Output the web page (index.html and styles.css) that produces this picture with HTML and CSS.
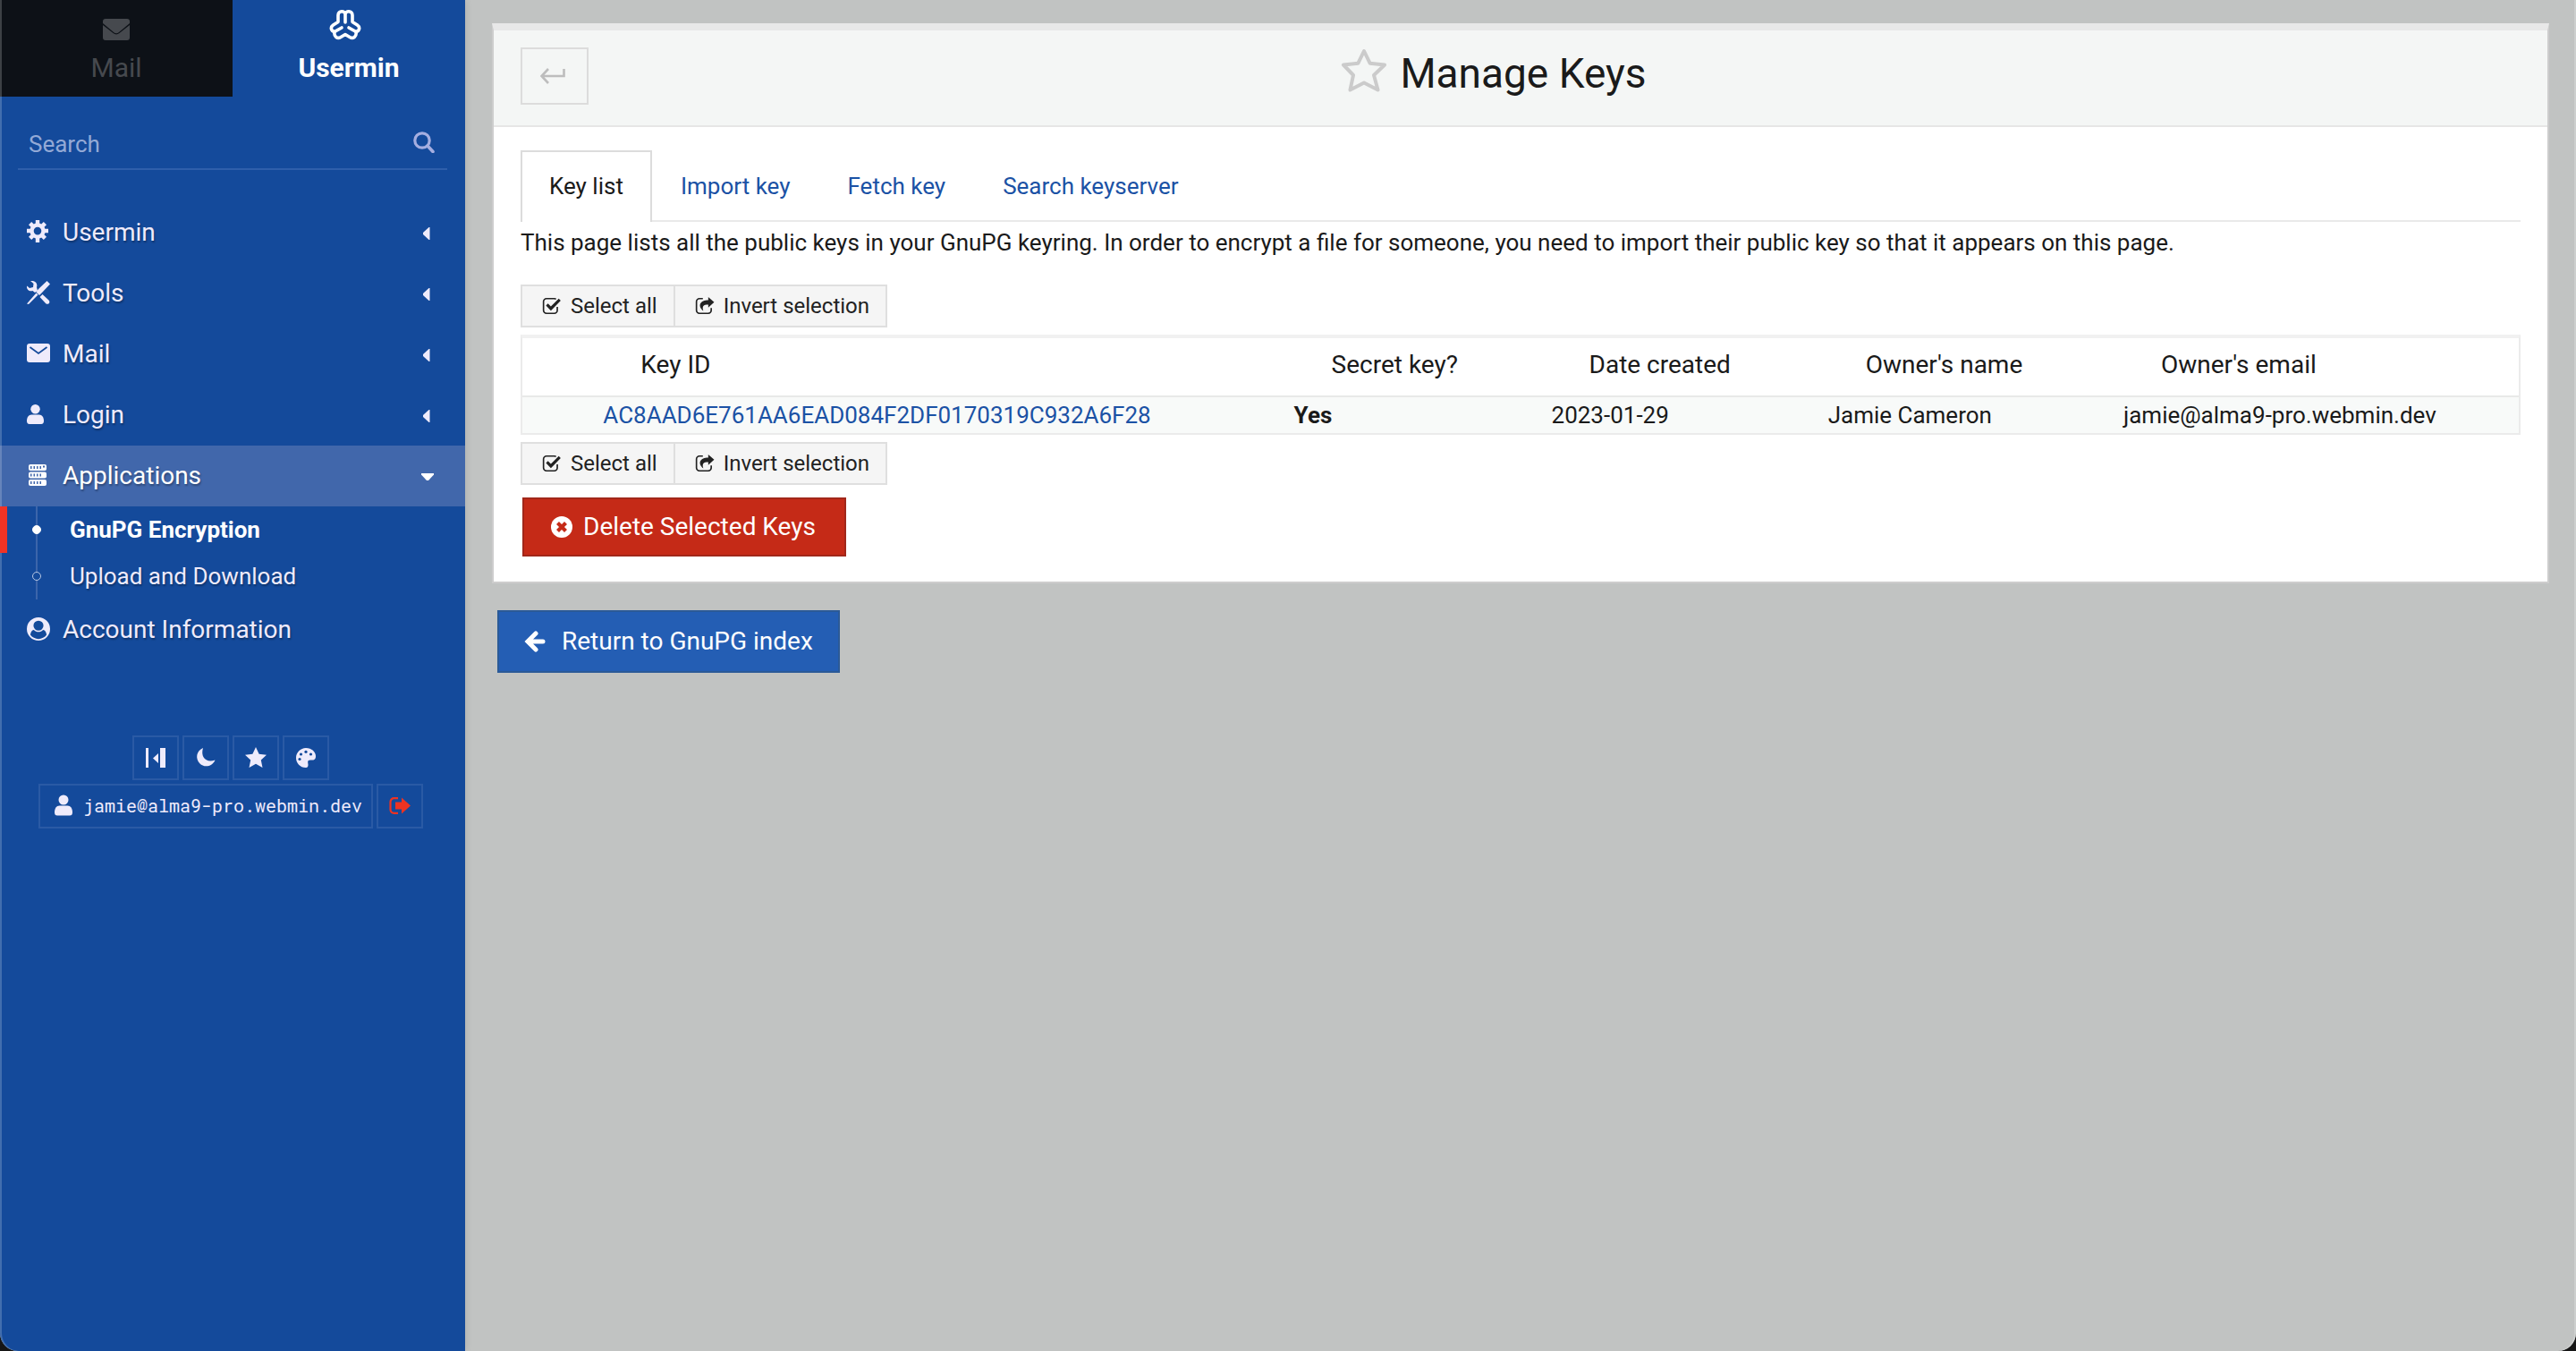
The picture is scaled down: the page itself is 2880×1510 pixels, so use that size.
FILE: index.html
```html
<!DOCTYPE html>
<html lang="en">
<head>
<meta charset="utf-8">
<meta name="viewport" content="width=device-width, initial-scale=1">
<title>Manage Keys</title>
<link rel="stylesheet" href="styles.css">
</head>
<body>
<svg class="defs" aria-hidden="true">
  <symbol id="check-square" viewBox="0 0 20 20"><path d="M15.500 11v3.500a3 3 0 0 1-3 3h-8a3 3 0 0 1-3-3v-9a3 3 0 0 1 3-3h8q1 0 1.700.5" fill="none" stroke="currentColor" stroke-width="1.500"/><path d="M4 9.500l2-2 3 3L17 2.500l2 2L9 14.700z" fill="currentColor"/></symbol>
  <symbol id="share-square" viewBox="0 0 20 20"><path d="M8 2.500H4.500a3 3 0 0 0-3 3v9a3 3 0 0 0 3 3h9a3 3 0 0 0 3-3V12" fill="none" stroke="currentColor" stroke-width="1.500"/><path d="M13.500 1l6 5.200-6 5.300V8.600c-5 0-6.500 1.500-5 6.400-6.500-5.500-3-11 5-11z" fill="currentColor"/></symbol>
  <symbol id="caret" viewBox="0 0 8 14"><path d="M7.500 0v14h-1L0 8V6L6.500 0z" fill="currentColor"/></symbol>
  <symbol id="person" viewBox="0 0 20 24"><circle cx="10" cy="6" r="5.500" fill="currentColor"/><path d="M0 20c0-4.500 2-7.500 5.500-7.500h9c3.500 0 5.500 3 5.500 7.500 0 2.500-1 3.500-3 3.500H3c-2 0-3-1-3-3.500z" fill="currentColor"/></symbol>
</svg>
<div class="layout">
  <aside class="sidebar">
    <nav class="switch">
      <a class="switch-tab dark" href="#mail">
        <svg class="switch-icon" viewBox="0 0 30 34"><path d="M3 5h24a3 3 0 0 1 3 3v2L18 20q-3 2.500-6 0L0 10V8a3 3 0 0 1 3-3z" fill="currentColor"/><path d="M0 12l11.500 9q3.500 2.800 7 0L30 12v14a3 3 0 0 1-3 3H3a3 3 0 0 1-3-3z" fill="currentColor"/></svg>
        <span>Mail</span>
      </a>
      <a class="switch-tab active" href="#usermin">
        <svg class="switch-icon wide" viewBox="0 0 36 36"><g fill="none" stroke="currentColor" stroke-width="3.600" stroke-linecap="round" stroke-linejoin="round"><path d="M18 15V6.500M18 6.500C18 1.500 10 1.500 10 7v7.500L4.500 18C1 20.500 2 24.500 6 25.500c-1 5 3 8.500 7 6l5-3 5 3c4 2.500 8-1 7-6 4-1 5-5 1.500-7.500L26 14.500V7c0-5.500-8-5.500-8-.5"/><path d="M6 25.500l8-4.500M30 25.500L22 21"/></g></svg>
        <span>Usermin</span>
      </a>
    </nav>
    <label class="search">
      <input type="search" placeholder="Search" aria-label="Search">
      <svg width="24" height="24" viewBox="0 0 24 24"><circle cx="10" cy="10" r="8.200" fill="none" stroke="currentColor" stroke-width="3.200"/><path d="M16 16l6 6.500" stroke="currentColor" stroke-width="3.600" stroke-linecap="round"/></svg>
    </label>
    <nav class="menu">
      <a class="item" href="#m1"><svg width="26" height="26" viewBox="0 0 26 26"><path fill="currentColor" fill-rule="evenodd" d="M9.800 0h4.400v3.600l2 .9L18.800 2l3.200 3.200-2.500 2.600.9 2H24v4.400h-3.600l-.9 2 2.500 2.600-3.200 3.200-2.600-2.500-2 .9V25H9.800v-4.600l-2-.9L5.200 22 2 18.800l2.500-2.600-.9-2H0V9.800h3.600l.9-2L2 5.200 5.200 2l2.600 2.500 2-.9zM12 7.800a4.300 4.300 0 1 0 0 8.600 4.300 4.300 0 0 0 0-8.600z"/></svg><span>Usermin</span><svg class="caret" width="8" height="14"><use href="#caret"/></svg></a>
      <a class="item" href="#m2"><svg width="26" height="26" viewBox="0 0 26 26"><g fill="currentColor"><path d="M22.500 0L26 3.500 16.500 13.500 14 16l-3.500-3.500L13 9zM10.500 13.500l2 2L2 26l-2-.5z"/><path d="M4 0c5-1 8.500 3 7 7l1 4-3 2-2.500-2C2.500 12.500-.8 9 .2 5.500L3 8l4-1 .5-4zM14.500 18l3-3 7 6.500c2.500 2.500-1 6-3.500 3.500z"/></g></svg><span>Tools</span><svg class="caret" width="8" height="14"><use href="#caret"/></svg></a>
      <a class="item" href="#m3"><svg width="26" height="22" viewBox="0 0 26 22"><rect width="26" height="21" rx="3" fill="currentColor"/><path d="M3.500 4l9.500 7 9.500-7" fill="none" stroke="#144a9b" stroke-width="1.800"/></svg><span>Mail</span><svg class="caret" width="8" height="14"><use href="#caret"/></svg></a>
      <a class="item" href="#m4"><svg width="19" height="24" viewBox="0 0 20 24"><use href="#person"/></svg><span>Login</span><svg class="caret" width="8" height="14"><use href="#caret"/></svg></a>
      <a class="item open" href="#m5"><svg width="24" height="24" viewBox="0 0 24 24"><g fill="currentColor"><rect x="2" width="20" height="7" rx="2"/><rect x="2" y="8.500" width="20" height="7" rx="2"/><rect x="2" y="17" width="20" height="7" rx="2"/></g><path d="M4 3.500h12M4 12h12M4 20.500h12" stroke="#4167ab" stroke-width="3" stroke-dasharray="1.500 2"/><path d="M18 2.500h2" stroke="#4167ab" stroke-width="2"/></svg><span>Applications</span><svg class="caret down" width="14" height="8" viewBox="0 0 14 8"><path d="M0 0h14v1.500L8 8H6L0 1.500z" fill="currentColor"/></svg></a>
      <div class="submenu">
        <a class="sub current" href="#s1"><span class="dot"></span>GnuPG Encryption</a>
        <a class="sub" href="#s2"><span class="dot"></span>Upload and Download</a>
      </div>
      <a class="item" href="#m6"><svg width="26" height="26" viewBox="0 0 1792 1792"><path fill="currentColor" fill-rule="evenodd" d="M1523 1339q-22-155-87.500-257.500t-184.500-118.500q-67 74-159.500 115.500t-195.500 41.500-195.500-41.500-159.500-115.500q-119 16-184.500 118.500t-87.500 257.500q106 150 271 237.500t356 87.500 356-87.500 271-237.500zm-243-699q0-159-112.500-271.500t-271.500-112.500-271.500 112.500-112.500 271.500 112.500 271.500 271.500 112.500 271.500-112.500 112.500-271.500zM896 0a896 896 0 1 1 0 1792A896 896 0 0 1 896 0z"/></svg><span>Account Information</span></a>
    </nav>
    <div class="tools">
      <div class="tool-row">
        <button class="tool" type="button" aria-label="Collapse menu"><svg width="24" height="24" viewBox="0 0 24 24"><path d="M1 1h3v22H1zM17 1h6v22h-6zM15 7v11L9 12.500z" fill="currentColor"/></svg></button>
        <button class="tool" type="button" aria-label="Night mode"><svg width="24" height="24" viewBox="0 0 24 24"><path d="M9 1C6 11 12 18 22.500 14.500 19 22.500 10 23 5.500 18.500 0 13 1.500 4 9 1z" fill="currentColor"/></svg></button>
        <button class="tool" type="button" aria-label="Favorites"><svg width="24" height="24" viewBox="0 0 24 24"><path d="M12 0l3.600 7.700 8.400 1-6.200 5.700 1.700 8.600-7.500-4.200L4.500 23l1.700-8.600L0 8.700l8.400-1z" fill="currentColor"/></svg></button>
        <button class="tool" type="button" aria-label="Theme"><svg width="24" height="24" viewBox="0 0 24 24"><path d="M12 1c6.500 0 11 4.500 11 9 0 5-3 4.500-6 4.500-4 0-2.500 3-2.500 5S14 23 12 23C5.500 23 1 18 1 12S6 1 12 1z" fill="currentColor"/><g fill="#144a9b"><circle cx="12" cy="5.300" r="1.600"/><circle cx="6.500" cy="8" r="1.600"/><circle cx="17.500" cy="8" r="1.600"/><circle cx="5" cy="13.500" r="1.600"/></g></svg></button>
      </div>
      <div class="tool-row">
        <a class="tool user" href="#user"><svg width="20" height="24"><use href="#person"/></svg>jamie@alma9-pro.webmin.dev</a>
        <button class="tool logout" type="button" aria-label="Log out"><svg width="24" height="22" viewBox="0 0 24 22"><path d="M10 2.200H5.500a4 4 0 0 0-4 4v8.600a4 4 0 0 0 4 4H10" fill="none" stroke="currentColor" stroke-width="2.200"/><path d="M7 6.500h7V1.500l10 9-10 9v-5H7z" fill="currentColor"/></svg></button>
      </div>
    </div>
  </aside>
  <main class="main">
    <section class="panel">
      <header class="panel-head">
        <button class="back" type="button" aria-label="Back"><svg width="28" height="18" viewBox="0 0 28 18"><path d="M26.500 1v8H2M9 1L1.500 9 9 17" fill="none" stroke="currentColor" stroke-width="2.600"/></svg></button>
        <h1><svg width="52" height="50" viewBox="0 0 52 50"><path d="M26 4l6.600 13.700L49 19.500 37 31l4.500 16.500L26 39.500l-15.500 8L14 31 3 19.500l16.400-1.800z" fill="none" stroke="#cbcbcb" stroke-width="4" stroke-linejoin="round"/></svg>Manage Keys</h1>
      </header>
      <div class="panel-body">
        <nav class="tabs">
          <a class="tab selected" href="#list">Key list</a>
          <a class="tab" href="#import">Import key</a>
          <a class="tab" href="#fetch">Fetch key</a>
          <a class="tab" href="#search">Search keyserver</a>
        </nav>
        <p class="intro">This page lists all the public keys in your GnuPG keyring. In order to encrypt a file for someone, you need to import their public key so that it appears on this page.</p>
        <div class="group">
          <button type="button"><svg width="22" height="22"><use href="#check-square"/></svg>Select all</button>
          <button type="button"><svg width="22" height="22"><use href="#share-square"/></svg>Invert selection</button>
        </div>
        <table class="keys">
          <colgroup><col class="c-check"><col class="c-id"><col class="c-secret"><col class="c-date"><col class="c-name"><col></colgroup>
          <thead><tr><th></th><th>Key ID</th><th>Secret key?</th><th>Date created</th><th>Owner's name</th><th>Owner's email</th></tr></thead>
          <tbody><tr><td></td><td><a href="#key">AC8AAD6E761AA6EAD084F2DF0170319C932A6F28</a></td><td><b>Yes</b></td><td>2023-01-29</td><td>Jamie Cameron</td><td>jamie@alma9-pro.webmin.dev</td></tr></tbody>
        </table>
        <div class="group">
          <button type="button"><svg width="22" height="22"><use href="#check-square"/></svg>Select all</button>
          <button type="button"><svg width="22" height="22"><use href="#share-square"/></svg>Invert selection</button>
        </div>
        <button class="delete" type="button"><svg width="24" height="24" viewBox="0 0 24 24"><circle cx="12" cy="12" r="12" fill="currentColor"/><path d="M7.500 7.500l9 9M16.500 7.500l-9 9" stroke="#c52a17" stroke-width="4.200"/></svg>Delete Selected Keys</button>
      </div>
    </section>
    <a class="return" href="#index"><svg width="24" height="24" viewBox="0 0 24 24"><path d="M13 3L4 12l9 9M5 12h16" fill="none" stroke="currentColor" stroke-width="5" stroke-linecap="round"/></svg>Return to GnuPG index</a>
  </main>
</div>
</body>
</html>
```
FILE: styles.css
```css
* { box-sizing: border-box; }
body {
  margin: 0;
  background: #161616;
  color: #1a1a1a;
  font-family: Roboto, "Liberation Sans", sans-serif;
  font-size: 26px;
  line-height: 36px;
}
a { color: #1b52a5; text-decoration: none; }
button { font: inherit; margin: 0; border-radius: 0; }
svg { flex: none; }
.defs { display: none; }
.layout {
  display: flex;
  min-height: 100vh;
  overflow: hidden;
  border-radius: 0 0 20px 20px;
  background: #c1c3c2;
}

.sidebar {
  width: 520px;
  flex: none;
  background: #144a9b;
  border-radius: 0 0 0 20px;
  box-shadow: inset 2px 0 #426eaf, 0 0 8px rgba(0, 0, 0, .12);
  color: #efebfb;
}
.switch { display: flex; }
.switch-tab {
  flex: 1;
  height: 108px;
  display: flex;
  flex-direction: column;
  align-items: center;
  gap: 8px;
  padding-top: 16px;
  font-size: 30px;
  color: #fff;
}
.switch-tab.dark { background: #0d1117; color: #46494e; box-shadow: inset 2px 0 #3d4145; }
.switch-tab.active { font-weight: 700; padding-top: 10px; }
.switch-icon { width: 30px; height: 34px; }
.switch-icon.wide { width: 36px; height: 36px; margin: 0 8px 4px 0; }
.search {
  display: flex;
  align-items: center;
  margin: 28px 20px 36px;
  height: 54px;
  padding: 0 14px 6px 12px;
  border-bottom: 2px solid #2f5fab;
  color: #a5aee0;
}
.search input {
  flex: 1;
  min-width: 0;
  padding: 4px 0 0;
  border: 0;
  outline: 0;
  background: none;
  font: inherit;
}
.search input::placeholder { color: #93a9d6; opacity: 1; }
.item {
  display: flex;
  align-items: center;
  height: 68px;
  padding: 0 39px 0 30px;
  font-size: 28px;
  color: #efebfb;
  text-shadow: 1px 2px 2px rgba(0, 0, 0, .3);
}
.item > svg:first-child { margin-top: -2px; }
.item span { flex: 1; }
.item > svg:first-child[width="26"] { margin-right: 14px; }
.item > svg:first-child[width="24"] { margin-right: 16px; }
.item > svg:first-child[width="19"] { margin-right: 21px; }
.item .caret { margin-top: 2px; }
.item .caret.down { margin-right: -4px; }
.item.open { background: #4167ab; color: #fff; box-shadow: inset 2px 0 #6684bb; }
.submenu {
  background: linear-gradient(#3c65aa, #3c65aa) 40px 0 / 2px 100% no-repeat;
}
.sub {
  display: flex;
  align-items: center;
  gap: 32px;
  height: 52px;
  padding-left: 36px;
  color: #efebfb;
  text-shadow: 1px 2px 2px rgba(0, 0, 0, .3);
}
.sub.current { padding-left: 28px; border-left: 8px solid #f03325; color: #fff; font-weight: 700; text-shadow: none; }
.dot { width: 10px; height: 10px; border: 1px solid #b8c8e4; border-radius: 50%; background: #144a9b; }
.sub.current .dot { background: #fff; border-color: #fff; }
.tools { display: flex; flex-direction: column; gap: 4px; padding: 84px 4px 0 0; }
.tool-row { display: flex; justify-content: center; gap: 4px; }
.tool {
  display: flex;
  align-items: center;
  justify-content: center;
  width: 52px;
  height: 50px;
  padding: 0;
  border: 2px solid #2a5aa5;
  background: none;
  color: #efebfb;
}
.tool.user {
  width: auto;
  gap: 12px;
  padding: 0 10px 2px 16px;
  font-family: "Roboto Mono", "Liberation Mono", monospace;
  font-size: 20px;
}
.tool.logout { color: #ee3322; }

.main {
  flex: 1;
  min-width: 0;
  padding: 26px 30px 40px;
  border-radius: 0 0 20px 0;
  box-shadow: inset -2px 0 #cdcfce;
}
.panel { background: #fff; border: 2px solid #cdcdcd; border-top: 8px solid #e8e8e8; }
.panel-head {
  display: grid;
  grid-template-columns: 1fr auto 1fr;
  align-items: start;
  height: 108px;
  padding: 19px 30px;
  background: #f4f6f5;
  border-bottom: 2px solid #e6e6e6;
}
.back {
  display: flex;
  align-items: center;
  justify-content: center;
  width: 76px;
  height: 64px;
  padding: 0 4px 0 0;
  border: 2px solid #dcdcdc;
  background: none;
  color: #bdbdbd;
}
h1 {
  display: flex;
  align-items: center;
  gap: 14px;
  margin: 0 60px 0 0;
  font-size: 46px;
  font-weight: 400;
  line-height: 56px;
}
h1 svg { margin-bottom: 8px; }
.panel-body { padding: 26px 30px 28px; }
.tabs { display: flex; border-bottom: 2px solid #e9e9e9; }
.tab { height: 78px; padding: 20px 30px; border: 2px solid transparent; border-bottom: 0; }
.tab.selected {
  height: 80px;
  margin-bottom: -2px;
  border-color: #dcdcdc;
  background: #fff;
  color: #1a1a1a;
}
.intro { margin: 5px 0 29px; }
.group { display: flex; }
.group button {
  display: flex;
  align-items: center;
  gap: 10px;
  height: 48px;
  padding: 0 18px 0 22px;
  border: 2px solid #dfdfdf;
  background: #f5f5f5;
  color: #222;
  font-size: 24px;
}
.group button + button { margin-left: -2px; }
.keys {
  width: 100%;
  margin: 8px 0;
  table-layout: fixed;
  border-collapse: separate;
  border-spacing: 0;
  border: 2px solid #ebebeb;
  border-top: 4px solid #f1f1f1;
}
.c-check { width: 3.6%; }
.c-id { width: 34.6%; }
.c-secret { width: 12.9%; }
.c-date { width: 13.85%; }
.c-name { width: 14.8%; }
.keys th {
  height: 66px;
  padding: 0 0 4px 52px;
  border-bottom: 2px solid #e8e9e8;
  text-align: left;
  font-weight: 400;
  font-size: 28px;
}
.keys td { height: 40px; padding: 0 10px; background: #f8faf9; }
.delete, .return {
  display: inline-flex;
  align-items: center;
  color: #fff;
  font-size: 28px;
}
.delete {
  gap: 12px;
  height: 66px;
  margin: 14px 2px 0;
  padding: 0 32px 0 30px;
  border: 2px solid #a1271a;
  background: #c52a17;
}
.return {
  gap: 18px;
  height: 70px;
  margin: 30px 6px 0;
  padding: 0 28px;
  border: 2px solid #2b5a97;
  background: #245eb4;
}
```
